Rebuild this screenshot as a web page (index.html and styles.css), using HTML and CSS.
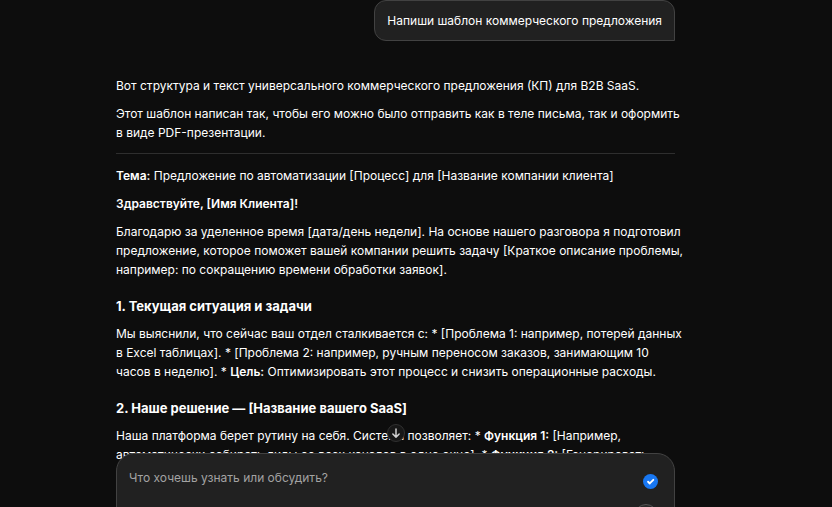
FILE: index.html
```html
<!DOCTYPE html>
<html lang="ru">
<head>
    <meta charset="UTF-8">
    <meta name="viewport" content="width=device-width, initial-scale=1.0">
    <title>Чат</title>
    <link rel="stylesheet" href="styles.css">
</head>
<body>
    <main class="chat">
        <div class="thread">
            <div class="user-message">Напиши шаблон коммерческого предложения</div>

            <article class="answer">
                <p>Вот структура и текст универсального коммерческого предложения (КП) для B2B SaaS.</p>
                <p>Этот шаблон написан так, чтобы его можно было отправить как в теле письма, так и оформить в виде PDF-презентации.</p>
                <hr>
                <p><strong>Тема:</strong> Предложение по автоматизации [Процесс] для [Название компании клиента]</p>
                <p><strong>Здравствуйте, [Имя Клиента]!</strong></p>
                <p>Благодарю за уделенное время [дата/день недели]. На основе нашего разговора я подготовил предложение, которое поможет вашей компании решить задачу [Краткое описание проблемы, например: по сокращению времени обработки заявок].</p>
                <h3>1. Текущая ситуация и задачи</h3>
                <p>Мы выяснили, что сейчас ваш отдел сталкивается с: * [Проблема 1: например, потерей данных в Excel таблицах]. * [Проблема 2: например, ручным переносом заказов, занимающим 10 часов в неделю]. * <strong>Цель:</strong> Оптимизировать этот процесс и снизить операционные расходы.</p>
                <h3>2. Наше решение — [Название вашего SaaS]</h3>
                <p>Наша платформа берет рутину на себя. Система позволяет: * <strong>Функция 1:</strong> [Например, автоматически собирать лиды со всех каналов в одно окно]. * <strong>Функция 2:</strong> [Генерировать</p>
            </article>
        </div>

        <div class="dock">
            <button class="scroll-down" type="button" aria-label="Вниз">
                <svg viewBox="0 0 16 16" width="12" height="12"><path d="M8 2.5v11M3.8 9.3L8 13.5l4.2-4.2"/></svg>
            </button>
            <form class="composer">
                <div class="composer-row">
                    <input class="composer-input" type="text" placeholder="Что хочешь узнать или обсудить?" aria-label="Сообщение">
                    <button class="confirm" type="button" aria-label="Готово">
                        <svg viewBox="0 0 16 16" width="15" height="15"><path d="M5.4 8.3l1.8 1.8L11 6.2"/></svg>
                    </button>
                </div>
                <div class="composer-tools">
                    <button class="round" type="button" aria-label="Отправить"></button>
                </div>
            </form>
        </div>
    </main>
</body>
</html>
```

FILE: styles.css
```css
:root {
    --bg-color: #0d0d0d;
    --panel: #212121;
    --border: #424242;
    --text-color: #fff;
    --muted: #a3a3a3;
    --accent: #1877f2;
}

* {
    box-sizing: border-box;
    margin: 0;
    padding: 0;
}

body {
    background: var(--bg-color);
    color: var(--text-color);
    font-family: Inter, "Liberation Sans", sans-serif;
    font-size: 12px;
    line-height: 19px;
}

button,
input {
    font: inherit;
    color: inherit;
}

.chat {
    position: relative;
    height: 100vh;
    overflow: hidden;
    padding: 0 157px 0 116px;
}

.thread {
    display: flex;
    flex-direction: column;
    gap: 35px;
}

.user-message {
    align-self: flex-end;
    padding: 10px 12px;
    background: var(--panel);
    border: 1px solid var(--border);
    border-radius: 12px 12px 0 12px;
}

/* text may run a little past the composer's edge */
.answer p {
    margin: 0 -10px 9px 0;
}

.answer hr {
    margin: 11px 0 12px;
    border: 0;
    border-top: 1px solid #2e2e2e;
}

.answer strong {
    font-weight: 600;
}

.answer h3 {
    margin: 18px 0 8px;
    font-size: 13px;
    font-weight: 700;
    line-height: 19px;
}

/* lies over the thread and runs past the bottom edge */
.dock {
    position: absolute;
    left: 116px;
    right: 157px;
    bottom: -34px;
    display: flex;
    flex-direction: column;
    align-items: center;
    gap: 11px;
}

.scroll-down {
    display: grid;
    place-items: center;
    width: 18px;
    height: 18px;
    background: #171717;
    border: 1px solid #303030;
    border-radius: 50%;
}

.scroll-down svg,
.confirm svg {
    fill: none;
    stroke: #fff;
    stroke-width: 2;
    stroke-linecap: round;
    stroke-linejoin: round;
}

.scroll-down svg {
    stroke: #d0d0d0;
}

.composer {
    width: 100%;
    padding: 14px 16px 12px 12px;
    background: var(--panel);
    border: 1px solid var(--border);
    border-radius: 18px;
}

.composer-row {
    display: flex;
    align-items: center;
    gap: 12px;
    height: 26px;
}

.composer-input {
    flex: 1;
    min-width: 0;
    height: 19px;
    align-self: flex-start;
    background: none;
    border: 0;
    outline: 0;
}

.composer-input::placeholder {
    color: var(--muted);
    opacity: 1;
}

.confirm {
    display: grid;
    place-items: center;
    width: 15px;
    height: 15px;
    background: var(--accent);
    border: 0;
    border-radius: 50%;
}

.composer-tools {
    display: flex;
    justify-content: flex-end;
    padding-top: 10px;
}

.round {
    width: 24px;
    height: 24px;
    background: #2b2b2b;
    border: 1px solid #555;
    border-radius: 50%;
}
```
